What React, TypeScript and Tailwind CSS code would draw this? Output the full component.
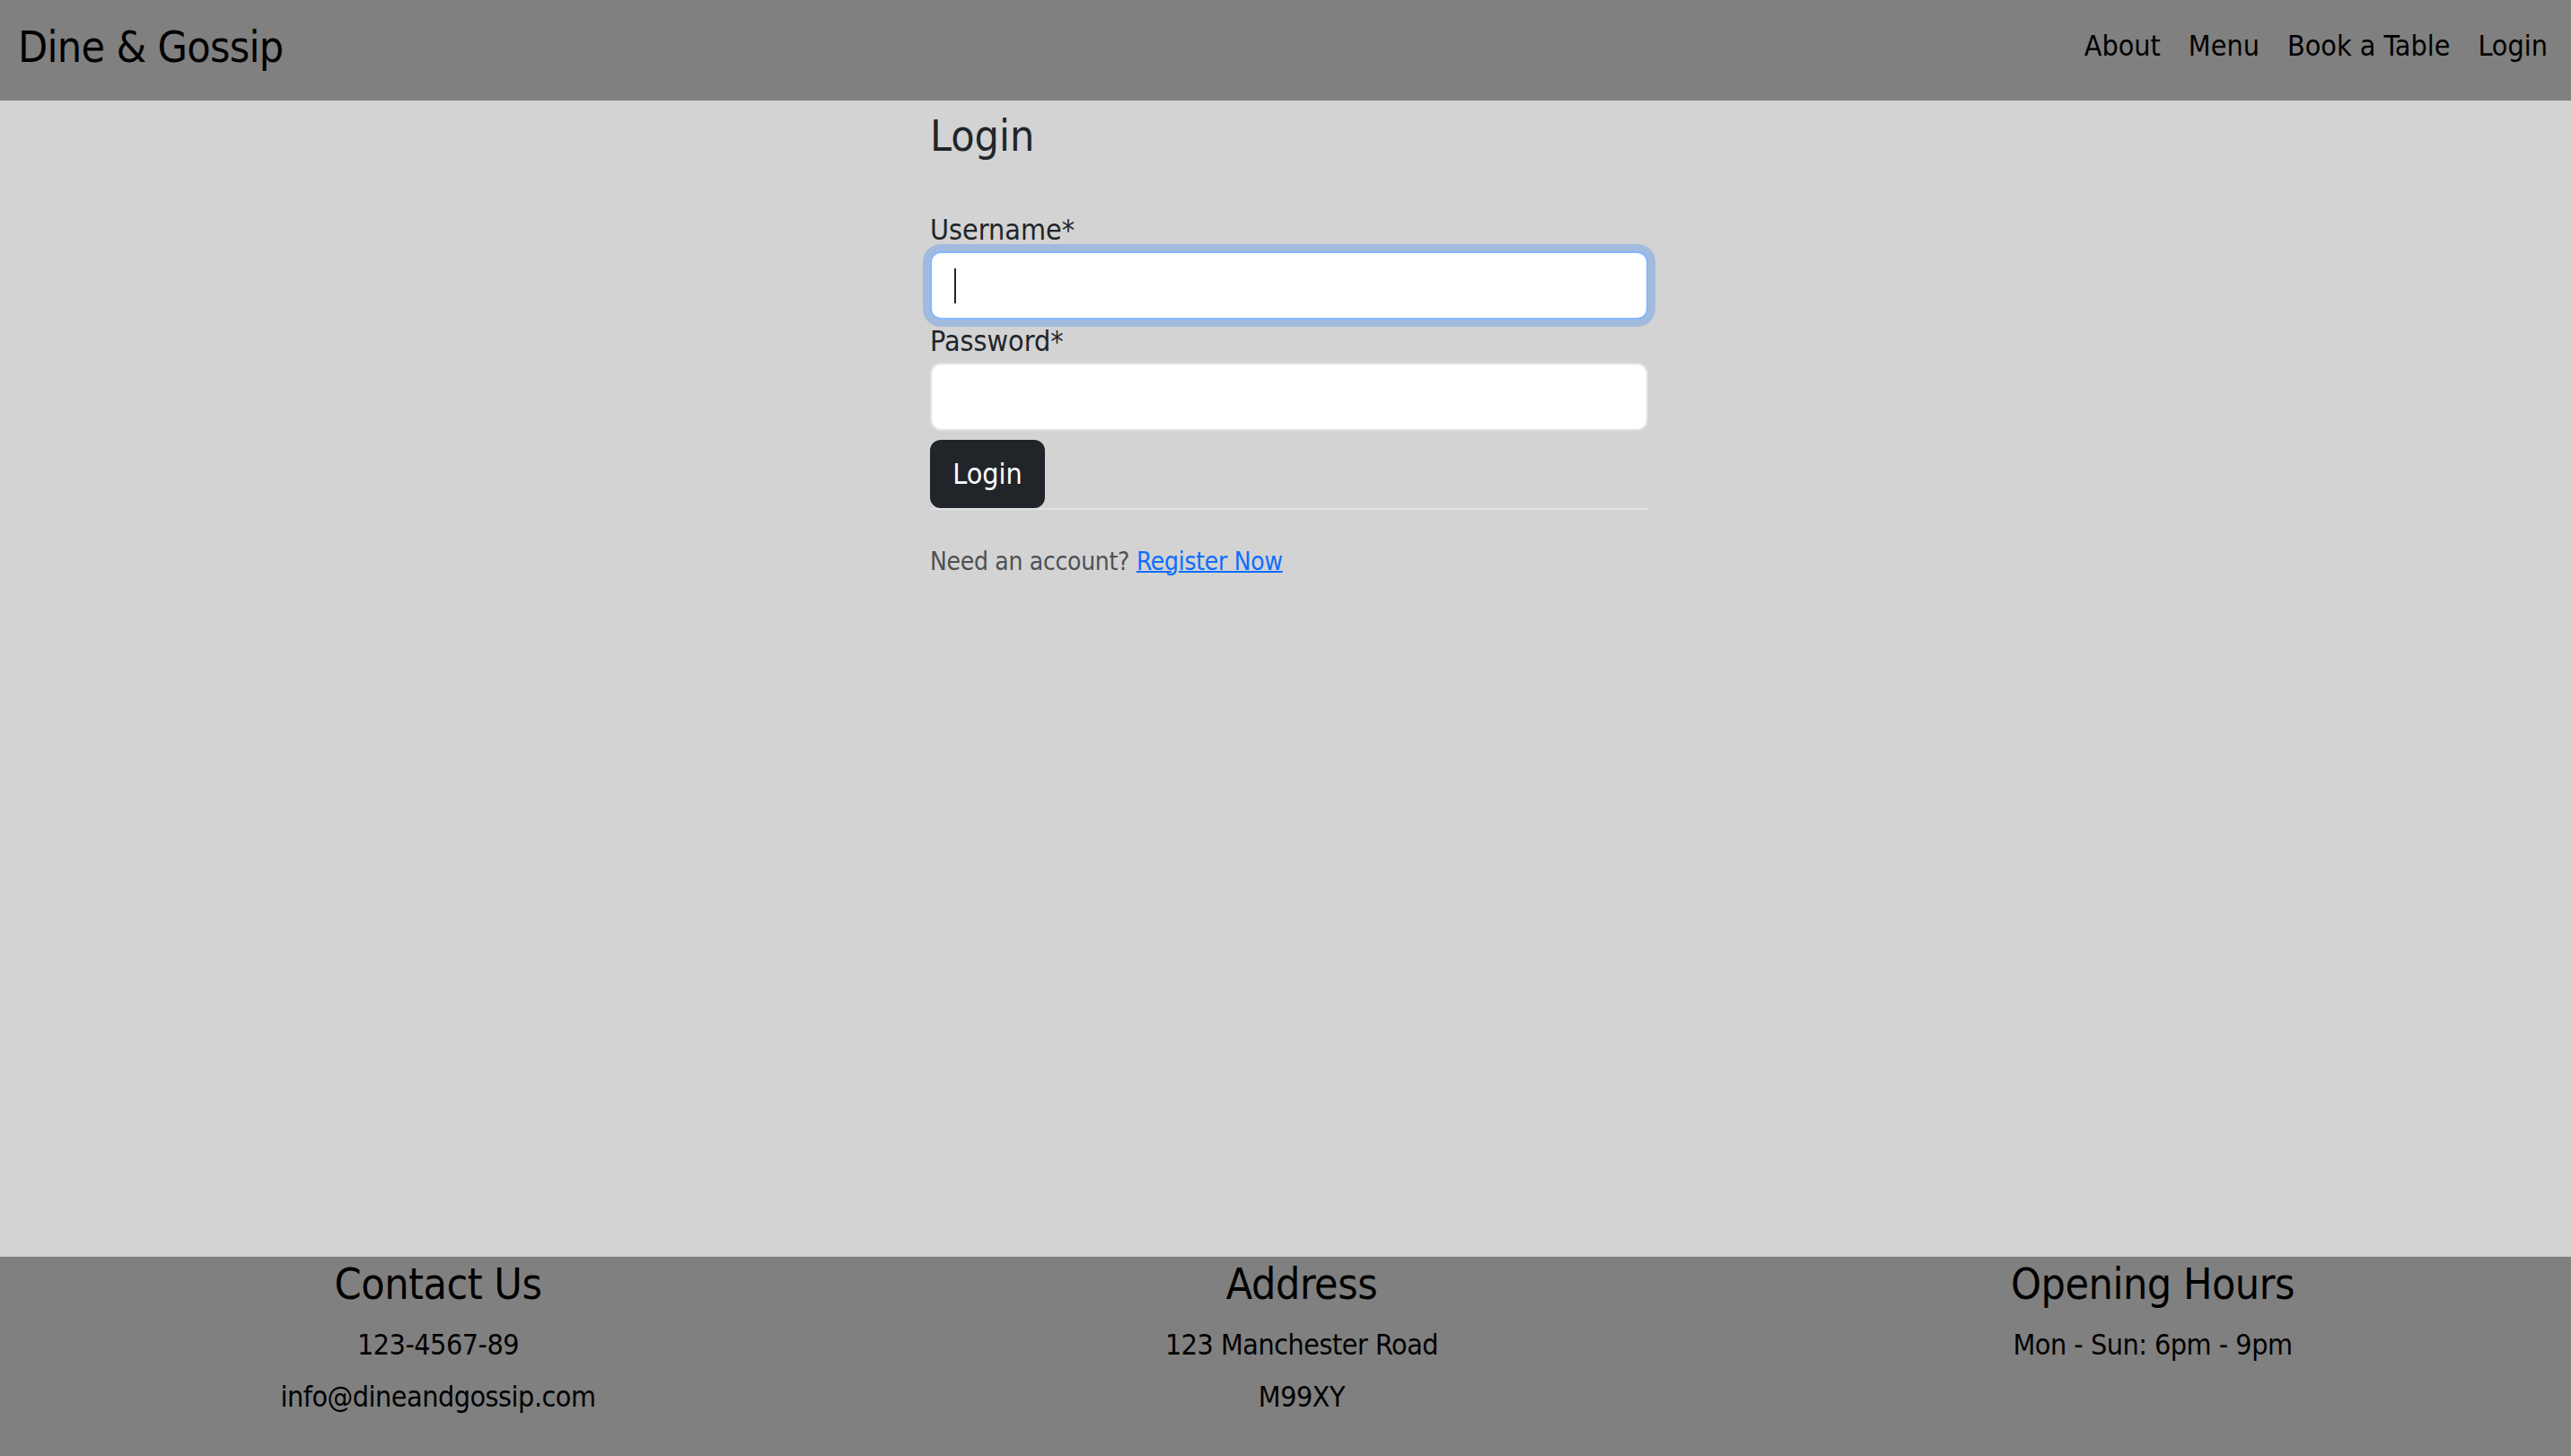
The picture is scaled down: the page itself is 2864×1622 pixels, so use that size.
import React from "react";

const navLinks = ["About", "Menu", "Book a Table", "Login"];

const Navbar = () => {
  return (
    <header className="flex h-[112px] items-start justify-between bg-[#808080] pl-[20px] pr-[26px]">
      {/* Brand */}
      <a href="#" className="mt-[23px] text-[48px] leading-[58px] tracking-[-0.7px] text-black">
        Dine &amp; Gossip
      </a>

      {/* Navigation Links */}
      <nav className="mt-[27px] flex gap-[31px] text-[32px] leading-[48px] text-black">
        {navLinks.map((link) => (
          <a key={link} href="#">
            {link}
          </a>
        ))}
      </nav>
    </header>
  );
};

const LoginForm = () => {
  return (
    <div className="mx-auto w-[808px] pl-[8px] pt-[10px]">
      <h1 className="text-[48px] leading-[58px] font-normal text-[#212529]">Login</h1>

      <form className="mt-[52px]" onSubmit={(e) => e.preventDefault()}>
        <label className="block text-[32px] leading-[48px] text-[#212529]">Username*</label>
        <div className="relative h-[76px]">
          <input
            type="text"
            className="h-full w-full rounded-[12px] border-2 border-[#86b7fe] bg-white px-[24px] text-[32px] text-[#212529] outline-none ring-[8px] ring-[#0d6efd]/25"
          />
          {/* text caret */}
          <span className="pointer-events-none absolute left-[27px] top-[19px] h-[39px] w-[2px] bg-[#212529]" />
        </div>

        <label className="block text-[32px] leading-[48px] text-[#212529]">Password*</label>
        <input
          type="password"
          className="block h-[76px] w-full rounded-[12px] border-2 border-[#dee2e6] bg-white px-[24px] text-[32px] outline-none"
        />

        <button
          type="submit"
          className="mt-[10px] flex h-[76px] w-[128px] items-center justify-center rounded-[12px] bg-[#212529] text-[32px] text-white"
        >
          Login
        </button>
      </form>

      <div className="h-[2px] w-full bg-[#dee2e6]" />

      <p className="mt-[37px] text-[28px] leading-[42px] tracking-[-0.3px] text-[#4e5154]">
        Need an account?{" "}
        <a href="#" className="text-[#0d6efd] underline decoration-2">
          Register Now
        </a>
      </p>
    </div>
  );
};

const Footer = () => {
  return (
    <footer className="grid grid-cols-[976px_948px_1fr] bg-[#808080] pt-[1px] pb-[42px] text-center tracking-[-0.5px] text-black">
      <div>
        <h3 className="mb-[15px] text-[48px] leading-[58px] font-normal">Contact Us</h3>
        <p className="text-[32px] leading-[48px]">123-4567-89</p>
        <p className="mt-[10px] text-[32px] leading-[48px]">info@dineandgossip.com</p>
      </div>
      <div>
        <h3 className="mb-[15px] text-[48px] leading-[58px] font-normal">Address</h3>
        <p className="text-[32px] leading-[48px]">123 Manchester Road</p>
        <p className="mt-[10px] text-[32px] leading-[48px]">M99XY</p>
      </div>
      <div className="pl-[8px]">
        <h3 className="mb-[15px] text-[48px] leading-[58px] font-normal">Opening Hours</h3>
        <p className="text-[32px] leading-[48px]">Mon - Sun: 6pm - 9pm</p>
      </div>
    </footer>
  );
};

export default function App() {
  return (
    <div className="flex min-h-screen flex-col bg-[#d3d3d3] font-['DejaVu_Sans_Condensed','DejaVu_Sans',sans-serif]">
      <Navbar />
      <main className="flex-1">
        <LoginForm />
      </main>
      <Footer />
    </div>
  );
}
